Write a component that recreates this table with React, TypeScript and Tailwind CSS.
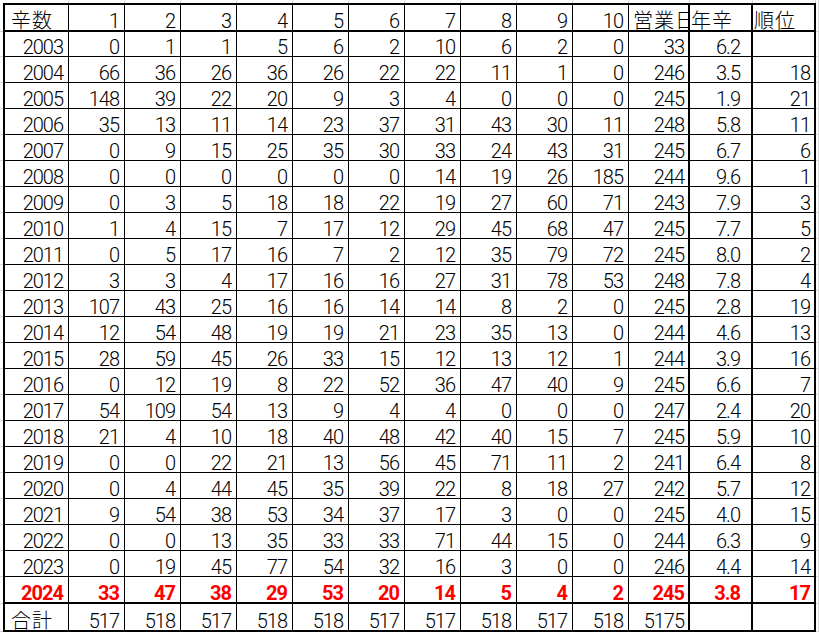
import React from "react";

type Row = { label: string; vals: string[]; red?: boolean; h: string };

const data: [string, string][] = [
  ["2003", "0,1,1,5,6,2,10,6,2,0,33,6.2,"],
  ["2004", "66,36,26,36,26,22,22,11,1,0,246,3.5,18"],
  ["2005", "148,39,22,20,9,3,4,0,0,0,245,1.9,21"],
  ["2006", "35,13,11,14,23,37,31,43,30,11,248,5.8,11"],
  ["2007", "0,9,15,25,35,30,33,24,43,31,245,6.7,6"],
  ["2008", "0,0,0,0,0,0,14,19,26,185,244,9.6,1"],
  ["2009", "0,3,5,18,18,22,19,27,60,71,243,7.9,3"],
  ["2010", "1,4,15,7,17,12,29,45,68,47,245,7.7,5"],
  ["2011", "0,5,17,16,7,2,12,35,79,72,245,8.0,2"],
  ["2012", "3,3,4,17,16,16,27,31,78,53,248,7.8,4"],
  ["2013", "107,43,25,16,16,14,14,8,2,0,245,2.8,19"],
  ["2014", "12,54,48,19,19,21,23,35,13,0,244,4.6,13"],
  ["2015", "28,59,45,26,33,15,12,13,12,1,244,3.9,16"],
  ["2016", "0,12,19,8,22,52,36,47,40,9,245,6.6,7"],
  ["2017", "54,109,54,13,9,4,4,0,0,0,247,2.4,20"],
  ["2018", "21,4,10,18,40,48,42,40,15,7,245,5.9,10"],
  ["2019", "0,0,22,21,13,56,45,71,11,2,241,6.4,8"],
  ["2020", "0,4,44,45,35,39,22,8,18,27,242,5.7,12"],
  ["2021", "9,54,38,53,34,37,17,3,0,0,245,4.0,15"],
  ["2022", "0,0,13,35,33,33,71,44,15,0,244,6.3,9"],
  ["2023", "0,19,45,77,54,32,16,3,0,0,246,4.4,14"],
  ["2024", "33,47,38,29,53,20,14,5,4,2,245,3.8,17"],
  ["合計", "517,518,517,518,518,517,517,518,517,518,5175,,"],
];

function heightOf(label: string) {
  if (label === "2003") return "h-[25px]";
  if (label === "2024") return "h-[27px]";
  if (label === "合計") return "h-[28px]";
  return "h-[26px]";
}

function bottomOf(label: string) {
  if (label === "2024" || label === "合計") return "border-b-2";
  return "border-b";
}

const rows: Row[] = data.map(([label, v]) => ({
  label,
  vals: v.split(","),
  red: label === "2024",
  h: heightOf(label),
}));

function colBorder(i: number) {
  if (i >= 11) return "border-r-2";
  return "border-r";
}

function colPad(i: number) {
  if (i <= 10) return "pr-[5px]";
  if (i === 11) return "pr-[4px]";
  if (i === 12) return "pr-[11px]";
  return "pr-[4px]";
}

const COLS = "grid-cols-[64px_repeat(10,56px)_61px_63px_63px]";
const CJK = "font-['Noto_Sans_CJK_JP',sans-serif]";

function SideGutter({ right }: { right?: boolean }) {
  return (
    <div className={`flex flex-col ${right ? "border-r border-[#d9d9d9]" : ""}`}>
      <div className="h-[2px]" />
      <div className="h-[27px] border-b border-[#d9d9d9]" />
      {rows.map((r) => (
        <div key={r.label} className={`${r.h} border-b border-[#d9d9d9]`} />
      ))}
    </div>
  );
}

export default function App() {
  const headers = ["辛数", "1", "2", "3", "4", "5", "6", "7", "8", "9", "10", "営業日", "年辛", "順位"];
  return (
    <div className="w-[819px] h-[633px] bg-white overflow-hidden font-['Roboto','Noto_Sans_CJK_JP',sans-serif] font-light text-[20px] text-black grid grid-cols-[3px_813px_3px] grid-rows-[3px_629px_1px]">
      {/* top gutter */}
      <div />
      <div className={`grid ${COLS} pl-[2px]`}>
        {headers.map((h, i) => (
          <div key={"g" + i} className="border-r border-[#d9d9d9]" />
        ))}
      </div>
      <div className="border-r border-[#d9d9d9]" />

      {/* left gutter */}
      <SideGutter />

      {/* table */}
      <div className={`border-l-2 border-t-2 border-black grid ${COLS} content-start`}>
        {headers.map((h, i) => {
          const isNum = i >= 1 && i <= 10;
          const pad =
            i === 0 ? "pl-[6px]" : i === 11 ? "pl-[4px]" : i >= 12 ? "pl-[1px]" : "pr-[5px]";
          return (
            <div
              key={"h" + i}
              className={`h-[27px] border-b-2 border-black ${colBorder(i)} flex items-end whitespace-nowrap ${
                i === 11 ? "overflow-hidden" : ""
              } ${isNum ? "justify-end" : "justify-start"} ${pad}`}
            >
              <span
                className={`leading-none ${
                  isNum ? "tracking-[-1px] mb-[-1px]" : `tracking-[1px] mb-[0px] ${CJK}`
                }`}
              >
                {h}
              </span>
            </div>
          );
        })}
        {rows.map((r) => (
          <React.Fragment key={r.label}>
            {[r.label, ...r.vals].map((v, i) => {
              const isLabelText = r.label === "合計" && i === 0;
              return (
                <div
                  key={r.label + i}
                  className={`${r.h} ${bottomOf(r.label)} border-black ${colBorder(i)} flex items-end whitespace-nowrap ${
                    isLabelText ? "justify-start pl-[6px]" : `justify-end ${colPad(i)}`
                  } ${r.red ? "text-[#ff0000] font-bold" : ""}`}
                >
                  <span
                    className={`leading-none ${
                      isLabelText ? `tracking-[1px] mb-[0px] ${CJK}` : "tracking-[-1px] mb-[-1px]"
                    }`}
                  >
                    {v}
                  </span>
                </div>
              );
            })}
          </React.Fragment>
        ))}
      </div>

      {/* right gutter */}
      <SideGutter right />

      {/* bottom gutter */}
      <div />
      <div />
      <div />
    </div>
  );
}
